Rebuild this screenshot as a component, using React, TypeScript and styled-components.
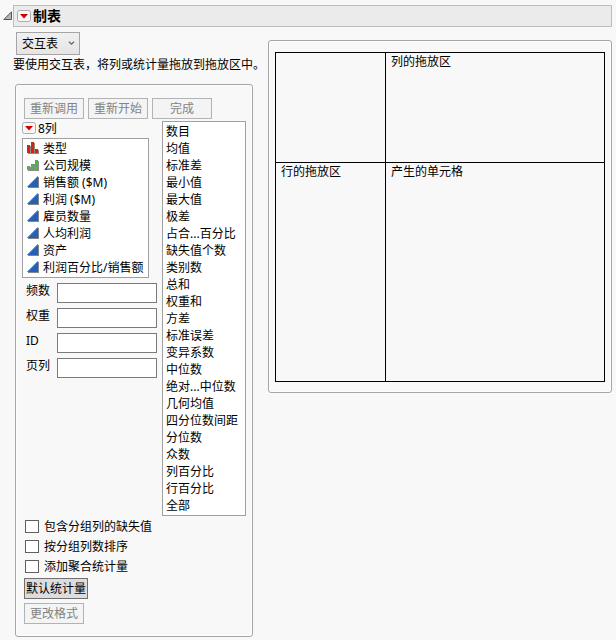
import React, { useId } from "react";
import styled, { createGlobalStyle, css } from "styled-components";

const GlobalStyle = createGlobalStyle`
  * { box-sizing: border-box; }
  body {
    margin: 0;
    background: #f8f8f8;
    color: #000;
    font: 12px/17px "Noto Sans", "Noto Sans CJK SC", sans-serif;
  }
  button, input, select { font: inherit; color: inherit; margin: 0; }
`;

const Page = styled.main`
  padding: 5px 4px 3px 3px;
`;

const Header = styled.header`
  display: flex;
  align-items: center;
  gap: 1px;
`;

const IconButton = styled.button`
  display: flex;
  flex: none;
  padding: 0;
  border: 0;
  background: none;
`;

const TitleBar = styled.div`
  display: flex;
  flex: 1;
  align-items: center;
  gap: 2px;
  height: 22px;
  padding-left: 3px;
  border: 1px solid #bdbdbd;
  background: #ebebeb;
`;

const Title = styled.h1`
  margin: 0;
  font-size: 14px;
  line-height: 20px;
  font-weight: 700;
`;

const Body = styled.div`
  display: flex;
  align-items: flex-start;
  gap: 15px;
  padding-left: 12px;
`;

const Left = styled.section`
  flex: none;
  width: 238px;
  padding-top: 5px;
`;

const ModeField = styled.div`
  display: grid;
  width: 64px;
  margin-left: 1px;
  align-items: center;

  & > * { grid-area: 1 / 1; }
  & > svg { justify-self: end; margin-right: 5px; pointer-events: none; }
`;

const ModeSelect = styled.select`
  appearance: none;
  width: 100%;
  height: 23px;
  padding: 0 5px;
  border: 1px solid #a5a5a5;
  border-radius: 0;
  background: linear-gradient(#f0f0f0, #e5e5e5);
  line-height: 20px;
`;

const Hint = styled.p`
  margin: 1px 0 11px -2px;
  white-space: nowrap;
`;

const panelFrame = css`
  border: 1px solid #a6a6a6;
  border-radius: 3px;
  box-shadow: inset 0 0 0 1px #fdfdfd;
`;

const ControlPanel = styled.div`
  ${panelFrame}
  padding: 13px 7px 12px 8px;
`;

const ButtonRow = styled.div`
  display: flex;
  gap: 4px;
`;

const PushButton = styled.button<{ $strong?: boolean }>`
  display: block;
  width: ${(p) => (p.$strong ? 64 : 60)}px;
  height: 21px;
  padding: 0;
  border: 1px solid ${(p) => (p.$strong ? "#707070" : "#b0b4b4")};
  background: ${(p) => (p.$strong ? "#dddddd" : "#f4f4f4")};
  line-height: 19px;
  white-space: nowrap;

  &:disabled { color: #838383; }
`;

const Lists = styled.div`
  display: flex;
  justify-content: space-between;
  align-items: flex-start;
  margin: 2px -1px 0 -2px;
`;

const ColumnSide = styled.div`
  width: 135px;
`;

const ColumnHeading = styled.div`
  display: flex;
  align-items: flex-start;
  gap: 2px;
  height: 17px;
  line-height: 15px;

  & > button { margin-top: 1px; }
`;

const ListBox = styled.ul`
  width: 127px;
  margin: 0;
  padding: 1px 0;
  border: 1px solid #a0a0a0;
  background: #fff;
  list-style: none;
  white-space: nowrap;
`;

const StatList = styled(ListBox)`
  width: 84px;
`;

const Item = styled.li`
  display: flex;
  align-items: center;
  gap: 4px;
  height: 17px;
  padding-left: 3px;
`;

const ColumnItem = styled(Item)`
  padding-left: 4px;
`;

const Fields = styled.div`
  display: grid;
  gap: 5px;
  padding: 5px 0 0 4px;
`;

const Field = styled.div`
  display: grid;
  grid-template-columns: 31px 1fr;
  align-items: start;
  line-height: 15px;
`;

const TextBox = styled.input`
  width: 100%;
  height: 20px;
  padding: 0 2px;
  border: 1px solid #7a7a7a;
  border-radius: 0;
  background: #fff;
`;

const Options = styled.div`
  display: grid;
  gap: 3px;
  padding: 2px 0 3px 1px;
`;

const Option = styled.label`
  display: flex;
  align-items: center;
  gap: 5px;
`;

const CheckBox = styled.input`
  appearance: none;
  flex: none;
  width: 14px;
  height: 13px;
  border: 1px solid #606060;
  background: #fff;

  &:checked { background: #606060; }
`;

const Actions = styled.div`
  display: grid;
  gap: 4px;
`;

const DropPanel = styled.section`
  ${panelFrame}
  flex: 1;
  margin-top: 13px;
  padding: 11px 6px 10px;
`;

const DropTable = styled.table`
  width: 100%;
  border-collapse: collapse;
  table-layout: fixed;
`;

const DropCell = styled.td<{ $tall?: boolean; $narrow?: boolean }>`
  width: ${(p) => (p.$narrow ? "33.4%" : "auto")};
  height: ${(p) => (p.$tall ? 219 : 110)}px;
  padding: 0 5px;
  border: 1px solid #000;
  vertical-align: top;
`;

const RedTriangle = () => (
  <svg width="14" height="12" viewBox="0 0 14 12" aria-hidden="true">
    <rect x=".5" y=".5" width="13" height="11" rx="2" fill="#f7f7f7" stroke="#aaa" />
    <path d="M3 4h8L7 8.5z" fill="#d40000" />
  </svg>
);

const Disclosure = () => (
  <svg width="9" height="10" viewBox="0 0 9 10" aria-hidden="true">
    <path d="M8.5.8v7.7H.8z" fill="#b5b5b5" stroke="#555" />
  </svg>
);

const Chevron = () => (
  <svg width="7" height="8" viewBox="0 0 7 8" aria-hidden="true">
    <path d="M1 1.7 3.5 4.2 6 1.7" fill="none" stroke="#666" strokeWidth="1.3" />
  </svg>
);

type Kind = "nominal" | "ordinal" | "continuous";

const KindIcon = ({ kind }: { kind: Kind }) => (
  <svg width="12" height="14" viewBox="0 0 12 14" aria-hidden="true">
    {kind === "nominal" && (
      <>
        <path d="M1 4h3V1h4v7h4v4H1z" fill="#8c8c8c" />
        <path d="M0 3h3v8H0zM4 0h3v11H4zM8 7h3v4H8z" fill="#d3260b" />
      </>
    )}
    {kind === "ordinal" && (
      <>
        <path d="M1 8h3V5h4V2h4v10H1z" fill="#8c8c8c" />
        <path d="M0 7h3v4H0zM4 5h3v6H4zM8 1h3v10H8z" fill="#4fb354" />
      </>
    )}
    {kind === "continuous" && (
      <>
        <path d="M12 1v11H1v-1L11 1z" fill="#858585" />
        <path d="M11 0v11H0z" fill="#2560b4" />
        <path d="M10.7.6.6 10.7" stroke="#5d9be0" fill="none" />
      </>
    )}
  </svg>
);

const columns: { name: string; kind: Kind }[] = [
  { name: "类型", kind: "nominal" },
  { name: "公司规模", kind: "ordinal" },
  { name: "销售额 ($M)", kind: "continuous" },
  { name: "利润 ($M)", kind: "continuous" },
  { name: "雇员数量", kind: "continuous" },
  { name: "人均利润", kind: "continuous" },
  { name: "资产", kind: "continuous" },
  { name: "利润百分比/销售额", kind: "continuous" },
];

const statistics = [
  "数目", "均值", "标准差", "最小值", "最大值", "极差", "占合...百分比", "缺失值个数",
  "类别数", "总和", "权重和", "方差", "标准误差", "变异系数", "中位数", "绝对...中位数",
  "几何均值", "四分位数间距", "分位数", "众数", "列百分比", "行百分比", "全部",
];

const roles = ["频数", "权重", "ID", "页列"];
const options = ["包含分组列的缺失值", "按分组列数排序", "添加聚合统计量"];

const RoleField = ({ label }: { label: string }) => {
  const id = useId();
  return (
    <Field>
      <label htmlFor={id}>{label}</label>
      <TextBox id={id} type="text" />
    </Field>
  );
};

export default function App() {
  return (
    <Page lang="zh-CN">
      <GlobalStyle />
      <Header>
        <IconButton type="button" aria-label="折叠" aria-expanded="true">
          <Disclosure />
        </IconButton>
        <TitleBar>
          <IconButton type="button" aria-label="制表菜单">
            <RedTriangle />
          </IconButton>
          <Title>制表</Title>
        </TitleBar>
      </Header>
      <Body>
        <Left>
          <ModeField>
            <ModeSelect aria-label="模式">
              <option>交互表</option>
            </ModeSelect>
            <Chevron />
          </ModeField>
          <Hint>要使用交互表，将列或统计量拖放到拖放区中。</Hint>
          <ControlPanel>
            <ButtonRow>
              <PushButton type="button" disabled>重新调用</PushButton>
              <PushButton type="button" disabled>重新开始</PushButton>
              <PushButton type="button" disabled>完成</PushButton>
            </ButtonRow>
            <Lists>
              <ColumnSide>
                <ColumnHeading>
                  <IconButton type="button" aria-label="列菜单">
                    <RedTriangle />
                  </IconButton>
                  <span>8列</span>
                </ColumnHeading>
                <ListBox role="listbox" aria-label="列">
                  {columns.map((c) => (
                    <ColumnItem key={c.name} role="option" aria-selected="false">
                      <KindIcon kind={c.kind} />
                      {c.name}
                    </ColumnItem>
                  ))}
                </ListBox>
                <Fields>
                  {roles.map((r) => (
                    <RoleField key={r} label={r} />
                  ))}
                </Fields>
              </ColumnSide>
              <StatList role="listbox" aria-label="统计量">
                {statistics.map((s) => (
                  <Item key={s} role="option" aria-selected="false">{s}</Item>
                ))}
              </StatList>
            </Lists>
            <Options>
              {options.map((o) => (
                <Option key={o}>
                  <CheckBox type="checkbox" />
                  {o}
                </Option>
              ))}
            </Options>
            <Actions>
              <PushButton type="button" $strong>默认统计量</PushButton>
              <PushButton type="button" disabled>更改格式</PushButton>
            </Actions>
          </ControlPanel>
        </Left>
        <DropPanel>
          <DropTable>
            <tbody>
              <tr>
                <DropCell $narrow />
                <DropCell>列的拖放区</DropCell>
              </tr>
              <tr>
                <DropCell $narrow $tall>行的拖放区</DropCell>
                <DropCell $tall>产生的单元格</DropCell>
              </tr>
            </tbody>
          </DropTable>
        </DropPanel>
      </Body>
    </Page>
  );
}
